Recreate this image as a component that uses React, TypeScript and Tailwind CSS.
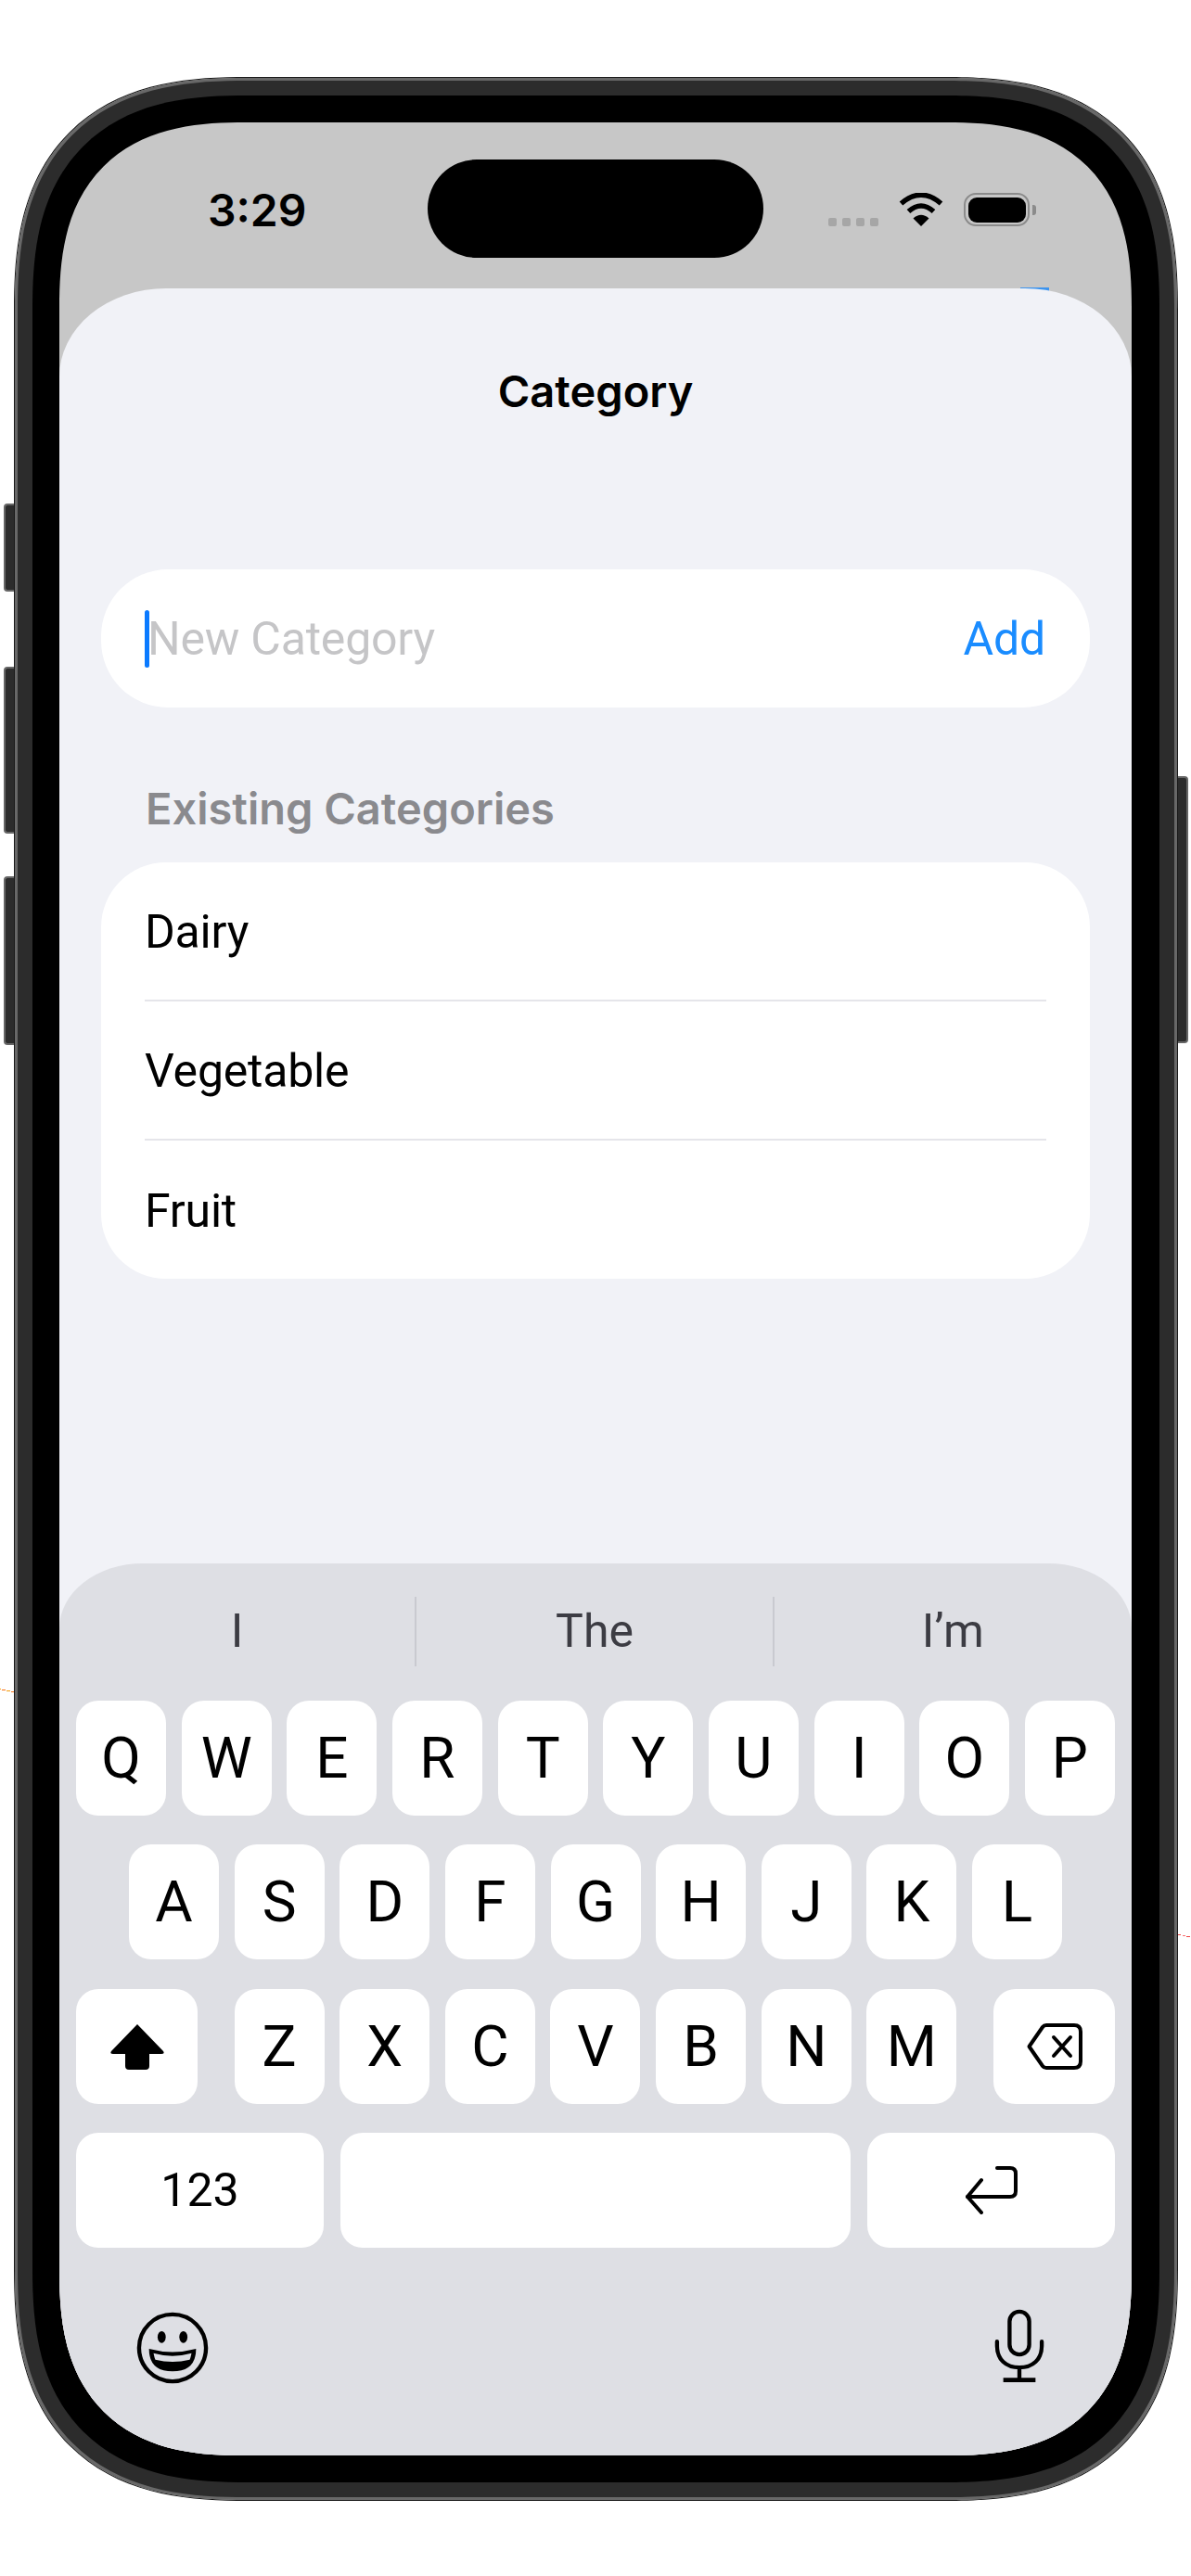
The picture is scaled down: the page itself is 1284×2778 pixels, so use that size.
const row1 = ["Q", "W", "E", "R", "T", "Y", "U", "I", "O", "P"]
const row2 = ["A", "S", "D", "F", "G", "H", "J", "K", "L"]
const row3 = ["Z", "X", "C", "V", "B", "N", "M"]
const categories = ["Dairy", "Vegetable", "Fruit"]

function Key({ label }: { label: string }) {
    return (
        <div className="w-[97px] h-[124px] bg-white rounded-[24px] flex items-center justify-center text-[62px] leading-none text-black font-[Roboto,sans-serif]">
            {label}
        </div>
    )
}

function Wifi() {
    return (
        <svg width="48" height="36" viewBox="0 0 48 36" fill="none">
            <path d="M2.5 11.5 Q24 -7 45.5 11.5" stroke="#000" strokeWidth="5.5" />
            <path d="M10.5 20 Q24 8 37.5 20" stroke="#000" strokeWidth="5.5" />
            <path d="M24 36 L15.5 27.5 Q24 20 32.5 27.5 Z" fill="#000" />
        </svg>
    )
}

function Battery() {
    return (
        <div className="flex items-center gap-[3px]">
            <div className="w-[71px] h-[36px] rounded-[13px] border-[2.5px] border-[#8b8b8b] p-[2.5px]">
                <div className="w-full h-full bg-black rounded-[9px]" />
            </div>
            <div className="w-[4px] h-[11px] bg-[#8b8b8b] rounded-r-[3px]" />
        </div>
    )
}

function ShiftIcon() {
    return (
        <svg width="60" height="50" viewBox="0 0 60 50">
            <path d="M30 1 L58 30 Q60 33 56 33 L43 33 L43 46 Q43 50 39 50 L21 50 Q17 50 17 46 L17 33 L4 33 Q0 33 2 30 Z" fill="#000" />
        </svg>
    )
}

function BackspaceIcon() {
    return (
        <svg width="60" height="50" viewBox="0 0 60 50" fill="none" stroke="#000" strokeWidth="4" strokeLinecap="round" strokeLinejoin="round">
            <path d="M2.5 25 L17 4 Q18.5 2 21 2 L51 2 Q58 2 58 9 L58 41 Q58 48 51 48 L21 48 Q18.5 48 17 46 Z" />
            <path d="M29 15 L47 35 M47 15 L29 35" />
        </svg>
    )
}

function ReturnIcon() {
    return (
        <svg width="58" height="52" viewBox="0 0 58 52" fill="none" stroke="#000" strokeWidth="4" strokeLinecap="round" strokeLinejoin="round">
            <path d="M35 2 L49 2 Q55 2 55 8 L55 27 Q55 33 49 33 L3 33" />
            <path d="M18 15 L3 33 L18 50" />
        </svg>
    )
}

function EmojiIcon() {
    return (
        <svg width="78" height="78" viewBox="0 0 80 80" fill="none">
            <circle cx="40" cy="40" r="37" stroke="#000" strokeWidth="4.5" />
            <ellipse cx="28" cy="28" rx="4.5" ry="6.5" fill="#000" />
            <ellipse cx="52" cy="28" rx="4.5" ry="6.5" fill="#000" />
            <path d="M14 41 Q40 48 66 41 Q66 66 40 66 Q14 66 14 41 Z" fill="#000" />
            <path d="M19 46 Q40 52 61 46 Q60 51 59 53 Q40 58 21 53 Q20 51 19 46 Z" fill="#dedfe4" />
        </svg>
    )
}

function MicIcon() {
    return (
        <svg width="54" height="82" viewBox="0 0 56 82" fill="none" stroke="#000" strokeWidth="4.5" strokeLinecap="round">
            <rect x="17" y="2.5" width="22" height="48" rx="11" />
            <path d="M3 36 L3 41 C3 56 13 65 28 65 C43 65 53 56 53 41 L53 36" />
            <path d="M28 65 L28 79" />
            <path d="M10 79 L46 79" strokeLinecap="butt" strokeWidth="5" />
        </svg>
    )
}

export default function App() {
    return (
        <div className="relative w-[1284px] h-[2778px] bg-white pt-[84px] pl-[16px] font-[Inter,sans-serif]">
            {/* stray marks left and right of the frame */}
            <svg className="absolute left-0 top-[1820px]" width="16" height="6" fill="none">
                <path d="M0 1.5 H1" stroke="#f59e0b" />
                <path d="M2 2.5 H6" stroke="#f97316" />
                <path d="M7 3.5 H11" stroke="#f59e0b" />
                <path d="M12 4.5 H15" stroke="#f97316" />
            </svg>
            <svg className="absolute left-[1270px] top-[2085px]" width="14" height="5" fill="none">
                <path d="M0 1.5 H3" stroke="#ef4444" />
                <path d="M5 2.5 H8" stroke="#f87171" />
                <path d="M9 3.5 H13" stroke="#ef4444" />
            </svg>

            <div className="relative w-[1253px] h-[2612px]">
                {/* side buttons */}
                <div className="absolute left-[-12px] top-[459px] w-[13px] h-[95px] bg-[#2c2c2c] border-2 border-r-0 border-[#666] rounded-l-[4px]" />
                <div className="absolute left-[-12px] top-[635px] w-[13px] h-[180px] bg-[#2c2c2c] border-2 border-r-0 border-[#666] rounded-l-[4px]" />
                <div className="absolute left-[-12px] top-[861px] w-[13px] h-[182px] bg-[#2c2c2c] border-2 border-r-0 border-[#666] rounded-l-[4px]" />
                <div className="absolute right-[-12px] top-[753px] w-[13px] h-[288px] bg-[#2c2c2c] border-2 border-l-0 border-[#666] rounded-r-[4px]" />

                <div className="relative w-full h-full bg-[#2c2c2c] border-[3px] border-[#686868] rounded-[250px] [corner-shape:superellipse(1.35)] p-[16px] outline outline-1 outline-[#1a1a1a]">
                    <div className="w-full h-full bg-black rounded-[230px] [corner-shape:superellipse(1.35)] pt-[29px] pb-[29px] pl-[29px] pr-[30px]">
                        <div className="relative w-full h-full bg-[#c7c7c7] rounded-[200px] [corner-shape:superellipse(1.35)] overflow-hidden flex flex-col">
                            {/* status bar */}
                            <div className="grid grid-cols-[397px_362px_397px] h-[179px] shrink-0">
                                <div className="pl-[160px] pt-[66px] text-[48px] leading-[58px] font-semibold text-black">3:29</div>
                                <div className="mt-[40px] h-[106px] bg-black rounded-[53px]" />
                                <div className="pl-[70px] pt-[76px] flex items-start">
                                    <div className="flex gap-[6px] mt-[27px]">
                                        <div className="w-[9px] h-[9px] rounded-[2px] bg-[#a6a6a6]" />
                                        <div className="w-[9px] h-[9px] rounded-[2px] bg-[#a6a6a6]" />
                                        <div className="w-[9px] h-[9px] rounded-[2px] bg-[#a6a6a6]" />
                                        <div className="w-[9px] h-[9px] rounded-[2px] bg-[#a6a6a6]" />
                                    </div>
                                    <div className="ml-[22px]"><Wifi /></div>
                                    <div className="ml-[22px]"><Battery /></div>
                                </div>
                            </div>

                            {/* sliver of the button behind the sheet */}
                            <div className="absolute left-[1036px] top-[178px] w-[31px] h-[6px] bg-[#3d94ee]" />

                            {/* sheet */}
                            <div className="relative flex-1 flex flex-col bg-[#f1f2f7] rounded-tl-[115px_95px] rounded-tr-[115px_95px]">
                                <div className="mt-[81px] h-[60px] leading-[60px] text-center text-[47px] font-semibold text-black">Category</div>

                                <div className="mx-[45px] mt-[162px] h-[149px] bg-white rounded-[72px] flex items-center pl-[47px] pr-[48px] font-[Roboto,sans-serif]">
                                    <div className="w-[5px] h-[62px] shrink-0 bg-[#0a7aff] rounded-full" />
                                    <span className="flex-1 ml-[-2px] pt-[2px] text-[50px] tracking-[-0.2px] text-[#c5c5c7]">New Category</span>
                                    <span className="pt-[2px] text-[50px] tracking-[-0.2px] text-[#1a8cff]">Add</span>
                                </div>

                                <div className="mt-[79px] ml-[93px] h-[60px] leading-[60px] text-[47px] font-semibold text-[#8a8a8e]">Existing Categories</div>

                                <div className="mx-[45px] mt-[28px] bg-white rounded-[70px] px-[47px] font-[Roboto,sans-serif]">
                                    {categories.map((c, i) => (
                                        <div key={c} className={i < 2 ? "h-[150px] pt-[3px] flex items-center text-[50px] tracking-[-0.2px] text-black border-b-2 border-[#e5e5ea]" : "h-[149px] pt-[3px] flex items-center text-[50px] tracking-[-0.2px] text-black"}>
                                            {c}
                                        </div>
                                    ))}
                                </div>

                                {/* keyboard */}
                                <div className="mt-auto h-[962px] bg-[#dedfe4] rounded-tl-[90px_70px] rounded-tr-[90px_70px] pt-[36px] font-[Roboto,sans-serif]">
                                    <div className="grid grid-cols-3 h-[68px] text-[50px] text-[#3c3c43]">
                                        <div className="flex items-center justify-center border-r-2 border-[#c9cad0]">I</div>
                                        <div className="flex items-center justify-center border-r-2 border-[#c9cad0]">The</div>
                                        <div className="flex items-center justify-center">I’m</div>
                                    </div>

                                    <div className="mt-[44px] px-[18px] flex flex-col gap-[31.4px]">
                                        <div className="flex justify-between">
                                            {row1.map((k) => <Key key={k} label={k} />)}
                                        </div>
                                        <div className="flex justify-between px-[57px]">
                                            {row2.map((k) => <Key key={k} label={k} />)}
                                        </div>
                                        <div className="flex justify-between">
                                            <div className="w-[131px] h-[124px] bg-white rounded-[24px] flex items-center justify-center"><ShiftIcon /></div>
                                            <div className="w-[779px] flex justify-between">
                                                {row3.map((k) => <Key key={k} label={k} />)}
                                            </div>
                                            <div className="w-[131px] h-[124px] bg-white rounded-[24px] flex items-center justify-center"><BackspaceIcon /></div>
                                        </div>
                                        <div className="flex gap-[18px]">
                                            <div className="w-[267px] h-[124px] bg-white rounded-[24px] flex items-center justify-center text-[50px] text-black">123</div>
                                            <div className="flex-1 h-[124px] bg-white rounded-[24px]" />
                                            <div className="w-[267px] h-[124px] bg-white rounded-[24px] flex items-center justify-center"><ReturnIcon /></div>
                                        </div>
                                    </div>

                                    <div className="mt-[65px] pl-[83px] pr-[94px] flex justify-between items-start">
                                        <div className="mt-[4px]"><EmojiIcon /></div>
                                        <MicIcon />
                                    </div>
                                </div>
                            </div>
                        </div>
                    </div>
                </div>
            </div>
        </div>
    )
}
